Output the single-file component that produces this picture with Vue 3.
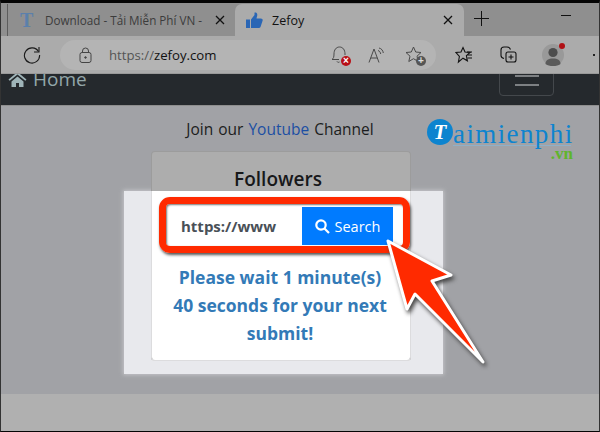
<template>
  <div class="screen">
    <!-- browser tabs -->
    <div class="tabstrip">
      <div class="tab">
        <span class="tab-t">T</span>
        <span class="tab-title">Download - Tải Miễn Phí VN -</span>
        <svg class="tab-x" width="10" height="10" viewBox="0 0 10 10"><path d="M1 1l8 8M9 1l-8 8" stroke="#111" stroke-width="1.3" /></svg>
      </div>
      <div class="tab active">
        <svg width="17" height="17" viewBox="0 0 17 17"><path d="M0 7.500h4V16H0zM5 7.500l3.500-4.500V.8c0-.7 2.800-.8 2.800 2 0 1.500-.6 2.600-.8 3.700h4.300c1.700 0 2.200 1.300 1.700 2.500l-2 6c-.3.700-.9 1-1.600 1H5z" fill="#2a66b5" /></svg>
        <span class="active-title">Zefoy</span>
        <svg class="active-x" width="10" height="10" viewBox="0 0 10 10"><path d="M1 1l8 8M9 1l-8 8" stroke="#111" stroke-width="1.3" /></svg>
      </div>
      <svg class="plus" width="15" height="15" viewBox="0 0 15 15"><path d="M7.500 0v15M0 7.500h15" stroke="#111" stroke-width="1" /></svg>
      <div class="minimize"></div>
    </div>

    <!-- address bar -->
    <div class="toolbar">
      <svg class="reload" width="18" height="18" viewBox="0 0 18 18" fill="none" stroke="#1a1a1a" stroke-width="1.100"><path d="M15.500 5.500A7.600 7.600 0 1 0 16.600 9" /><path d="M16 1v5h-5" /></svg>
      <div class="address">
        <svg width="13" height="16" viewBox="0 0 13 16" fill="none" stroke="#444" stroke-width="1"><rect x="1" y="5.500" width="11" height="10" rx="2" /><path d="M3.500 5.500V4a3 3 0 0 1 6 0v1.500" /><circle cx="6.500" cy="10.500" r=".8" fill="#444" /></svg>
        <span class="url"><span class="url-dim">https://</span>zefoy.com</span>
        <div class="addr-icons">
          <span class="bell">
            <svg width="16" height="17" viewBox="0 0 16 17" fill="none" stroke="#4a4a4a" stroke-width="1"><path d="M1 13.500c1.500-1 2-2.500 2-5.500 0-4 2-7 5.500-7S14 4 14 8v1M1 13.500h7M6 15.500c.5 1 2 1 2.500.5" /></svg>
            <i class="bell-x">×</i>
          </span>
          <span class="read">
            <svg width="16" height="16" viewBox="0 0 16 16" fill="none" stroke="#4a4a4a" stroke-width="1"><path d="M1 15.500L6 2l5 13.500M2.800 11h6.400" /><path d="M10 3.500c1.500.5 2.500 1.700 2.700 3.500M11 1c2.500.5 4 2.500 4.300 5" /></svg>
          </span>
          <span class="fav">
            <svg width="17" height="17" viewBox="0 0 17 17" fill="none" stroke="#4a4a4a" stroke-width="1"><path d="M8.500 1l2.200 5 5.300.5-4 3.700 1.200 5.300-4.700-2.800-4.700 2.800 1.200-5.300-4-3.700 5.300-.5z" stroke-linejoin="round" /></svg>
            <i class="fav-plus">+</i>
          </span>
        </div>
      </div>
      <svg class="collect-star" width="18" height="18" viewBox="0 0 18 18" fill="none" stroke="#111" stroke-width="1.100"><path d="M8 1.500l2 4.500 5 .4-3.600 3.400 1 5-4.400-2.600L3.400 16l1-5.500L1 6.500l5-.5z" /><path d="M12 6h5M13 9h4M12.500 12h4.500" /></svg>
      <svg class="collect" width="17" height="17" viewBox="0 0 17 17" fill="none" stroke="#111" stroke-width="1.100"><rect x="6" y="6" width="10" height="10" rx="2" /><path d="M11 8.500v5M8.500 11h5" /><path d="M4 12.500C2 12 1 11 1 9.500V4c0-1.700 1-3 3-3h3c2 0 3 1 3.500 2.500" /></svg>
      <span class="avatar">
        <svg width="22" height="22" viewBox="0 0 22 22"><circle cx="11" cy="11" r="11" fill="#999" /><circle cx="11" cy="8.500" r="4.600" fill="#4d4d4d" /><path d="M3.500 20c0-4 3-5.500 7.500-5.500S18.500 16 18.500 20c-2 1.400-4.500 2-7.500 2s-5.500-.6-7.500-2z" fill="#5a5a5a" /></svg>
        <i class="dot"></i>
      </span>
      <i class="more"></i>
    </div>

    <!-- site nav -->
    <div class="navbar">
      <div class="brand">
        <svg width="19" height="15" viewBox="0 0 18 15"><path d="M9 0L0 7.500l1.200 1.300L9 2.400l7.800 6.400L18 7.500zM3 9.500V15h4.500v-4h3v4H15V9.500L9 4.500z" fill="#9fb4b8" /></svg>
        <span>Home</span>
      </div>
      <div class="toggler">
        <i></i>
        <i></i>
      </div>
    </div>

    <!-- page -->
    <div class="page">
      <div class="highlight"></div>
      <div class="col">
        <p class="join">Join our <a>Youtube</a> Channel</p>
        <div class="card">
          <h3>Followers</h3>
          <div class="search">
            <div class="input">https://www</div>
            <div class="btn">
              <svg width="15" height="15" viewBox="0 0 15 15" fill="none" stroke="#fff" stroke-width="2.200"><circle cx="6" cy="6" r="4.700" /><path d="M9.500 9.500l4.500 4.500" /></svg>
              Search
            </div>
          </div>
          <p class="wait">Please wait 1 minute(s)</p>
          <p class="wait">40 seconds for your next submit!</p>
        </div>
      </div>
    </div>
    <div class="footer"></div>

    <!-- overlays added on the screenshot -->
    <div class="logo">
      <div class="logo-mark">T</div>
      <div class="logo-text">aimienphi</div>
      <div class="logo-vn">.vn</div>
    </div>
    <div class="redbox"></div>
    <svg class="arrow" width="110" height="135" viewBox="380 235 110 135">
      <path d="M388 241L451 275L432 281L483 362L415 294L407 309Z" fill="#ff2a00" stroke="#fff" stroke-width="3" stroke-linejoin="round" />
    </svg>
  </div>
</template>

<script setup>
</script>

<style>
html, body {
  margin: 0;
  overflow: hidden;
}
</style>

<style scoped>
.screen {
  position: relative;
  width: 600px;
  height: 432px;
  box-sizing: border-box;
  border-top: 3px solid #050505;
  border-bottom: 1px solid #050505;
  border-left: 1px solid #333;
  border-right: 1px solid #333;
  display: flex;
  flex-direction: column;
  overflow: hidden;
  font-family: "Open Sans", "Noto Sans", sans-serif;
  background: #aaa;
}

.tabstrip {
  height: 33px;
  flex: none;
  background: #8f8f8f;
  display: flex;
  align-items: flex-end;
  position: relative;
}
.tab {
  width: 228px;
  height: 32px;
  box-sizing: border-box;
  margin-left: 6px;
  border-left: 1px solid #5c5c5c;
  display: flex;
  align-items: center;
  padding-left: 12px;
  font-size: 11.700px;
  color: #3c3c3c;
}
.tab-t {
  width: 25px;
  font: bold 20px "Liberation Serif", serif;
  color: #5b80ab;
}
.tab-title {
  width: 161px;
  white-space: nowrap;
  overflow: hidden;
}
.tab-x {
  margin-left: 9px;
}
.tab.active {
  width: 229px;
  margin-left: 0;
  height: 32px;
  border: 0;
  border-radius: 7px 7px 0 0;
  background: #ababab;
  padding-left: 11px;
  color: #111;
  font-size: 12.500px;
}
.active-title {
  margin-left: 9px;
}
.active-x {
  margin-left: auto;
  margin-right: 11px;
}
.plus {
  margin: 0 0 10px 10px;
}
.minimize {
  width: 10px;
  height: 1px;
  background: #111;
  margin: 0 0 20px 72px;
}

.toolbar {
  height: 38px;
  flex: none;
  box-sizing: border-box;
  background: #ababab;
  border-bottom: 1px solid #999;
  display: flex;
  align-items: center;
  position: relative;
}
.reload {
  margin-left: 22px;
}
.address {
  width: 376px;
  height: 30px;
  box-sizing: border-box;
  margin-left: 19px;
  border-radius: 15px;
  background: #b4b4b4;
  display: flex;
  align-items: center;
  padding-left: 19px;
}
.url {
  margin-left: 17px;
  font-size: 13.200px;
  color: #111;
}
.url-dim {
  color: #555;
}
.addr-icons {
  margin-left: auto;
  margin-right: 14px;
  display: flex;
  align-items: center;
  gap: 21px;
}
.bell, .read, .fav {
  position: relative;
  display: flex;
}
.bell-x, .fav-plus {
  position: absolute;
  right: -4px;
  bottom: -3px;
  width: 10px;
  height: 10px;
  border-radius: 50%;
  background: #b81017;
  color: #fff;
  font: bold 10px/10px "Liberation Sans", sans-serif;
  text-align: center;
}
.fav-plus {
  background: #555;
  color: #ddd;
}
.collect-star {
  margin-left: 19px;
}
.collect {
  margin-left: 27px;
}
.avatar {
  margin-left: 25px;
  position: relative;
  display: flex;
}
.dot {
  position: absolute;
  top: -1px;
  right: -1px;
  width: 6px;
  height: 6px;
  border-radius: 50%;
  background: #b01015;
}
.more {
  width: 2px;
  height: 2px;
  background: #222;
  margin-left: 29px;
}

.navbar {
  height: 32px;
  flex: none;
  box-sizing: border-box;
  background: #25292d;
  border-bottom: 1px solid #8e8e8e;
  display: flex;
  justify-content: space-between;
  overflow: hidden;
}
.brand {
  display: flex;
  align-items: center;
  gap: 6px;
  margin: -9px 0 0 7px;
  height: 28px;
  font-size: 19px;
  color: #93a6a9;
}
.toggler {
  width: 55px;
  height: 40px;
  box-sizing: border-box;
  margin: -18px 45px 0 0;
  border: 1px solid #44484c;
  border-radius: 4px;
  display: flex;
  flex-direction: column;
  align-items: center;
  justify-content: flex-end;
  gap: 7px;
  padding-bottom: 9px;
}
.toggler i {
  width: 24px;
  height: 2px;
  background: #7d8083;
}

.page {
  flex: 1;
  position: relative;
  background: #a1a2a6;
  padding-left: 150px;
}
.highlight {
  position: absolute;
  left: 123px;
  top: 85px;
  width: 319px;
  height: 183px;
  background: #e8e9ed;
  box-shadow: 0 0 4px 1px #c4c5c9;
}
.col {
  position: relative;
  width: 260px;
  display: flex;
  flex-direction: column;
  align-items: center;
}
.join {
  margin: 13px 0 0;
  height: 32px;
  width: 260px;
  text-align: center;
  text-indent: -2px;
  font-size: 15.500px;
  word-spacing: 1px;
  line-height: 20px;
  font-weight: 500;
  color: #1c1d20;
  white-space: nowrap;
}
.join a {
  color: #1c4fa3;
}
.card {
  width: 260px;
  height: 210px;
  box-sizing: border-box;
  border: 1px solid #9c9c9c;
  border-color: #9c9c9c #9c9c9c #dcdcde;
  border-radius: 4px;
  background: linear-gradient(#adadad 0, #adadad 39px, #fff 39px);
  display: flex;
  flex-direction: column;
  align-items: center;
  position: relative;
}
.card::after {
  content: "";
  position: absolute;
  left: -1px;
  right: -1px;
  top: 39px;
  bottom: -1px;
  border: 1px solid #dcdcde;
  border-top: 0;
  border-radius: 0 0 4px 4px;
}
.card h3 {
  margin: 15px 6px 0 0;
  font-size: 19px;
  line-height: 25px;
  font-weight: 600;
  color: #17181a;
}
.search {
  margin: 15px 1px 0 0;
  width: 225px;
  height: 38px;
  display: flex;
}
.input {
  width: 134px;
  box-sizing: border-box;
  padding-left: 13px;
  background: #fff;
  font-size: 15px;
  line-height: 38px;
  font-weight: 700;
  color: #495057;
  overflow: hidden;
}
.btn {
  width: 91px;
  background: #007bff;
  color: #fff;
  font-size: 14.500px;
  display: flex;
  align-items: center;
  justify-content: center;
  gap: 5px;
}
.wait {
  margin: 0 2px 0 0;
  width: 225px;
  font-size: 17.500px;
  line-height: 28px;
  font-weight: 700;
  color: #337ab7;
  text-align: center;
}
.search + .wait {
  margin-top: 18px;
}

.footer {
  height: 37px;
  flex: none;
  background: #b0b0b0;
}

.logo {
  position: absolute;
  left: 426px;
  top: 116px;
  width: 147px;
  height: 40px;
}
.logo-mark {
  width: 26px;
  height: 26px;
  border-radius: 50%;
  background: #0d84cf;
  color: #fff;
  font: italic bold 21px/26px "Liberation Serif", serif;
  text-align: center;
}
.logo-text {
  position: absolute;
  left: 26px;
  top: 0;
  width: 118px;
  font: 27px/30px "Liberation Serif", serif;
  letter-spacing: 1.400px;
  color: #0d84cf;
  border-bottom: 1px solid #8fb0c8;
  height: 26px;
}
.logo-vn {
  position: absolute;
  right: 1px;
  top: 28px;
  font: bold 17px/14px "Liberation Serif", serif;
  color: #5fb52c;
}

.redbox {
  position: absolute;
  left: 158px;
  top: 194px;
  width: 251px;
  height: 56px;
  box-sizing: border-box;
  border: 7px solid #ff2a00;
  border-radius: 11px;
  box-shadow: 1px 2px 3px #555, inset 1px 1px 2px #777;
}
.arrow {
  position: absolute;
  left: 379px;
  top: 232px;
  filter: drop-shadow(2px 3px 2px #444);
}
</style>
